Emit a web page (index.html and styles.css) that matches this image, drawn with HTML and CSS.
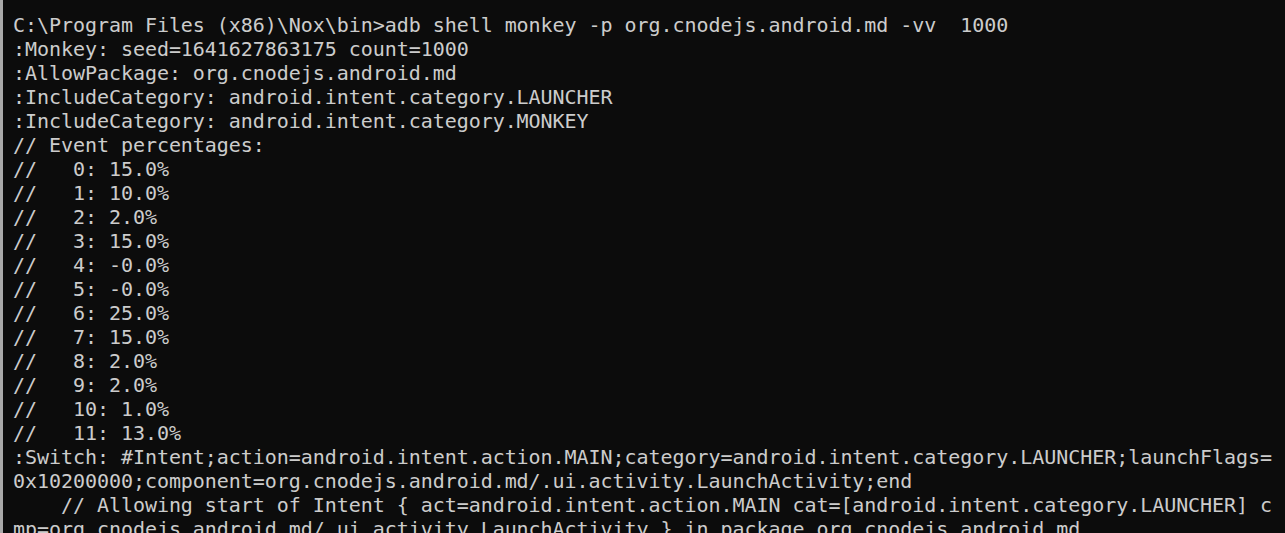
FILE: index.html
```html
<!DOCTYPE html>
<html lang="en">
<head>
    <meta charset="UTF-8">
    <meta name="viewport" content="width=device-width, initial-scale=1.0">
    <title>Command Prompt</title>
    <link rel="stylesheet" href="styles.css">
</head>
<body>

    <div class="terminal">
<pre class="output">C:\Program Files (x86)\Nox\bin&gt;adb shell monkey -p org.cnodejs.android.md -vv  1000
:Monkey: seed=1641627863175 count=1000
:AllowPackage: org.cnodejs.android.md
:IncludeCategory: android.intent.category.LAUNCHER
:IncludeCategory: android.intent.category.MONKEY
// Event percentages:
//   0: 15.0%
//   1: 10.0%
//   2: 2.0%
//   3: 15.0%
//   4: -0.0%
//   5: -0.0%
//   6: 25.0%
//   7: 15.0%
//   8: 2.0%
//   9: 2.0%
//   10: 1.0%
//   11: 13.0%
:Switch: #Intent;action=android.intent.action.MAIN;category=android.intent.category.LAUNCHER;launchFlags=
0x10200000;component=org.cnodejs.android.md/.ui.activity.LaunchActivity;end
    // Allowing start of Intent { act=android.intent.action.MAIN cat=[android.intent.category.LAUNCHER] c
mp=org.cnodejs.android.md/.ui.activity.LaunchActivity } in package org.cnodejs.android.md</pre>
    </div>

</body>
</html>
```

FILE: styles.css
```css
*{margin: 0;
    padding: 0;
    box-sizing: border-box;
}
html,body{
    height: 100%;
    background-color: #0c0c0c;
    overflow: hidden;
}
.terminal{
    height: 100%;
    border-left: 3px solid #a9a9a9;
    padding: 13px 0 0 10px;
    background-color: #0c0c0c;
}
.output{
    font-family: "DejaVu Sans Mono", "Liberation Mono", monospace;
    font-size: 20px;
    line-height: 24px;
    letter-spacing: -0.05px;
    color: #cccccc;
    white-space: pre;
}
```
